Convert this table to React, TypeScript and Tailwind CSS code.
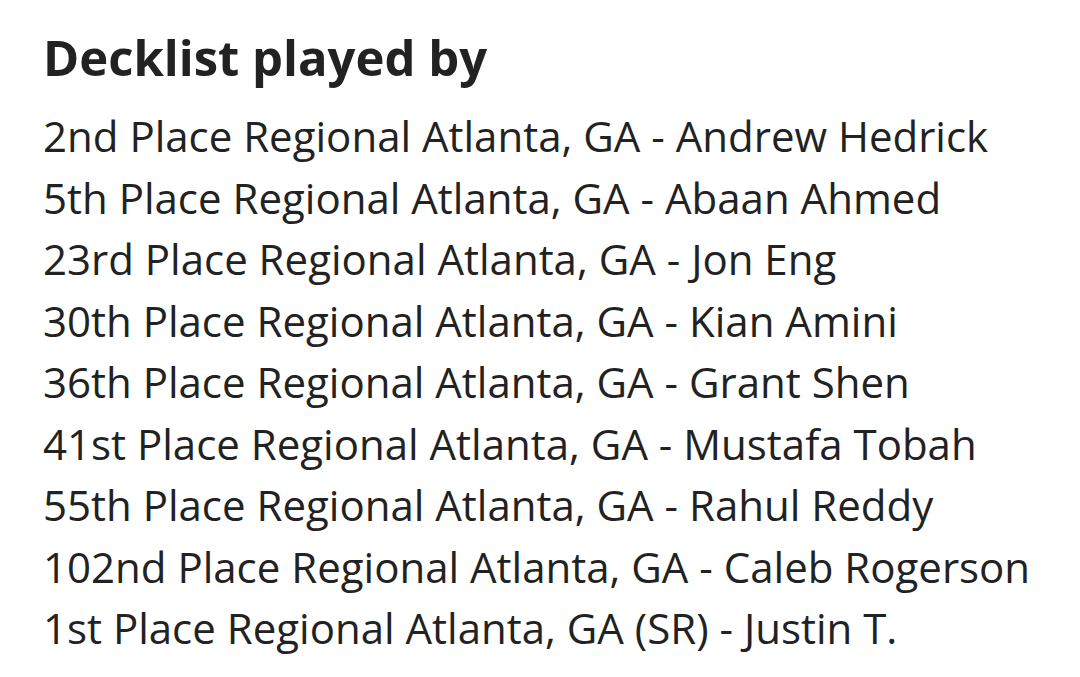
const placings = [
  "2nd Place Regional Atlanta, GA - Andrew Hedrick",
  "5th Place Regional Atlanta, GA - Abaan Ahmed",
  "23rd Place Regional Atlanta, GA - Jon Eng",
  "30th Place Regional Atlanta, GA - Kian Amini",
  "36th Place Regional Atlanta, GA - Grant Shen",
  "41st Place Regional Atlanta, GA - Mustafa Tobah",
  "55th Place Regional Atlanta, GA - Rahul Reddy",
  "102nd Place Regional Atlanta, GA - Caleb Rogerson",
  "1st Place Regional Atlanta, GA (SR) - Justin T.",
];

export default function App() {
  return (
    <div
      className="w-[1080px] h-[677px] bg-white text-[#222222] pl-[43px] pt-[29px]"
      style={{ fontFamily: '"Open Sans", sans-serif' }}
    >
      <h2 className="text-[49px] leading-[56px] font-bold">Decklist played by</h2>
      <ul className="mt-[20px]">
        {placings.map((line) => (
          <li key={line} className="text-[42px] leading-[61.5px]">
            {line}
          </li>
        ))}
      </ul>
    </div>
  );
}
